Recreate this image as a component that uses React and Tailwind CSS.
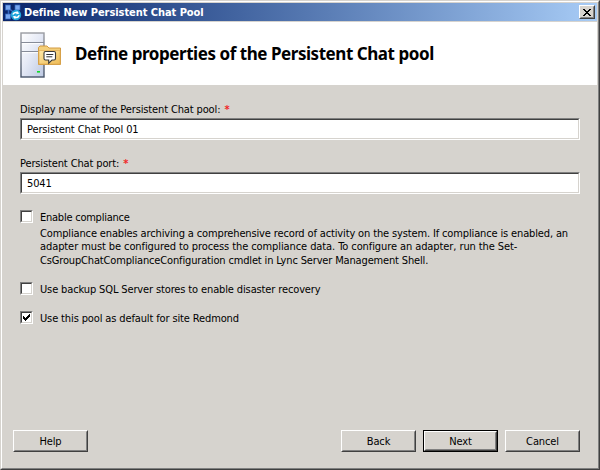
import React from "react";

function ServerIcon() {
  return (
    <svg width="44" height="48" viewBox="0 0 44 48" className="shrink-0">
      <defs>
        <linearGradient id="tower" x1="0" y1="0" x2="1" y2="1">
          <stop offset="0" stopColor="#ffffff" />
          <stop offset="0.45" stopColor="#e6eaf6" />
          <stop offset="1" stopColor="#bcc8e2" />
        </linearGradient>
        <linearGradient id="edge" x1="0" y1="0" x2="0" y2="1">
          <stop offset="0" stopColor="#9a9ca2" />
          <stop offset="1" stopColor="#47546a" />
        </linearGradient>
        <linearGradient id="folder" x1="0" y1="0" x2="1" y2="1">
          <stop offset="0" stopColor="#ffe9a8" />
          <stop offset="1" stopColor="#eebb55" />
        </linearGradient>
      </defs>
      <rect x="1" y="1" width="23" height="44" fill="url(#tower)" stroke="url(#edge)" strokeWidth="1.4" />
      <path d="M1 10.5H24M1 19.5H24" stroke="#868b98" strokeWidth="1.2" />
      <path d="M2 11.7H23M2 20.7H23" stroke="#fff" />
      <rect x="17" y="39" width="3" height="1.6" fill="#12dc2c" />
      <path d="M18.5 17V15.5L20 14H27L29 16H40.5V32.5H18.5Z" fill="#f3cf7b" stroke="#d39b43" />
      <path d="M19 18.5H40V32H19Z" fill="url(#folder)" stroke="#e0ac54" strokeWidth="0.7" />
      <path d="M25.5 19.5H34Q35.5 19.5 35.5 21V26.5Q35.5 28 34 28H32L28.7 31.2V28H25.5Q24 28 24 26.5V21Q24 19.5 25.5 19.5Z" fill="#fff" stroke="#393939" strokeWidth="1.1" />
      <path d="M26.3 22.5H33.3M26.3 24.8H32.3" stroke="#333" />
    </svg>
  );
}

function AppIcon() {
  return (
    <svg width="17" height="17" viewBox="0 0 17 17" className="shrink-0">
      <path d="M3.5 4L13 12M13 4L3.5 13M3.5 4V13M13 4V12" stroke="#3869bd" strokeWidth="1.5" />
      <g fill="#78a6ef" stroke="#3265bd" strokeWidth="0.7">
        <rect x="0.5" y="1" width="5" height="5" />
        <rect x="10" y="1" width="5" height="5" />
        <rect x="0.5" y="10" width="5" height="5" />
      </g>
      <circle cx="11" cy="11" r="5.2" fill="#1da4db" />
      <path d="M7.8 10.5Q9 7.5 12.5 8.8M14.3 11.3Q13 14.5 9.5 13.2" fill="none" stroke="#fff" strokeWidth="1.5" />
      <path d="M11.8 6.8L14.4 9.4L11.3 10.3ZM10.2 15.2L7.6 12.6L10.7 11.7Z" fill="#fff" />
    </svg>
  );
}

function Field({ label, value }) {
  return (
    <div>
      <div className="flex h-[15px] items-center gap-[4px] leading-[15px]">
        <span>{label}</span>
        <span className="-mt-px text-[11px] font-bold text-[#f02828]">*</span>
      </div>
      <div className="mt-px h-[22px] w-[560px] border border-t-[#808080] border-l-[#808080] border-r-white border-b-white">
        <div className="flex h-full items-center border border-t-[#404040] border-l-[#404040] border-r-[#d6d3ce] border-b-[#d6d3ce] bg-white pl-[5px]">
          <span>{value}</span>
        </div>
      </div>
    </div>
  );
}

function Check({ checked, children, textClass = "" }) {
  return (
    <div className="flex h-[13px] items-center gap-[7px]">
      <div className="h-[13px] w-[13px] shrink-0 border border-t-[#808080] border-l-[#808080] border-r-white border-b-white">
        <div className="flex h-full items-center justify-center border border-t-[#404040] border-l-[#404040] border-r-[#d6d3ce] border-b-[#d6d3ce] bg-white">
          {checked && (
            <svg width="7" height="7" viewBox="0 0 7 7" shapeRendering="crispEdges">
              <path d="M0 2h1v3h-1zM1 3h1v3h-1zM2 4h1v3h-1zM3 3h1v3h-1zM4 2h1v3h-1zM5 1h1v3h-1zM6 0h1v3h-1z" fill="#000" />
            </svg>
          )}
        </div>
      </div>
      <span className={`pt-[2px] ${textClass}`}>{children}</span>
    </div>
  );
}

function Button({ children, primary }) {
  return (
    <div className={`h-[22px] w-[75px] ${primary ? "border border-black" : ""}`}>
      <div className="h-full border border-t-white border-l-white border-r-[#404040] border-b-[#404040]">
        <div className="flex h-full items-center justify-center border border-t-[#d6d3ce] border-l-[#d6d3ce] border-r-[#808080] border-b-[#808080]">
          <span>{children}</span>
        </div>
      </div>
    </div>
  );
}

export default function App() {
  return (
    <div className="h-[470px] w-[600px] overflow-hidden border border-t-[#d6d3ce] border-l-[#d6d3ce] border-r-[#404040] border-b-[#404040] bg-[#d6d3ce] font-['DejaVu_Sans_Condensed','DejaVu_Sans',sans-serif] text-[11px] leading-[13px] tracking-[-0.13px] whitespace-nowrap text-black [font-stretch:condensed]">
      <div className="flex h-full flex-col border border-t-white border-l-white border-r-[#808080] border-b-[#808080] px-px pt-px">
        <div className="flex h-[18px] shrink-0 items-center bg-linear-to-r from-[#0a246a] to-[#a8ccf6] pr-[2px] pl-[2px]">
          <AppIcon />
          <span className="ml-[2px] text-[11px] font-bold tracking-[-0.06px] text-white">Define New Persistent Chat Pool</span>
          <div className="ml-auto h-[14px] w-[16px] border border-t-white border-l-white border-r-[#404040] border-b-[#404040] bg-[#d6d3ce]">
            <div className="flex h-full items-center justify-center border border-t-[#d6d3ce] border-l-[#d6d3ce] border-r-[#808080] border-b-[#808080]">
              <svg width="8" height="7" viewBox="0 0 8 7" shapeRendering="crispEdges">
                <path d="M0 0h2v1h-2zM6 0h2v1h-2zM1 1h2v1h-2zM5 1h2v1h-2zM2 2h4v1h-4zM3 3h2v1h-2zM2 4h4v1h-4zM1 5h2v1h-2zM5 5h2v1h-2zM0 6h2v1h-2zM6 6h2v1h-2z" fill="#000" />
              </svg>
            </div>
          </div>
        </div>
        <div className="mt-px flex h-[63px] shrink-0 bg-white pt-[10px] pl-[17px]">
          <ServerIcon />
          <h1 className="mt-[11px] ml-[11px] font-['Noto_Sans',sans-serif] text-[17px] leading-[22px] font-bold tracking-[-0.45px] [font-stretch:normal]">Define properties of the Persistent Chat pool</h1>
        </div>
        <div className="flex grow flex-col pt-[17px] pl-[17px]">
          <Field label="Display name of the Persistent Chat pool:" value="Persistent Chat Pool 01" />
          <div className="mt-[16px]">
            <Field label="Persistent Chat port:" value="5041" />
          </div>
          <div className="mt-[16px]">
            <Check textClass="tracking-[-0.24px]">Enable compliance</Check>
          </div>
          <div className="mt-[4px] ml-[20px] flex flex-col">
            <span className="h-[13px] tracking-[-0.14px]">Compliance enables archiving a comprehensive record of activity on the system. If compliance is enabled, an</span>
            <span className="h-[14px] tracking-[-0.09px]">adapter must be configured to process the compliance data. To configure an adapter, run the Set-</span>
            <span className="h-[13px] tracking-[-0.155px]">CsGroupChatComplianceConfiguration cmdlet in Lync Server Management Shell.</span>
          </div>
          <div className="mt-[15px]">
            <Check>Use backup SQL Server stores to enable disaster recovery</Check>
          </div>
          <div className="mt-[16px]">
            <Check checked>Use this pool as default for site Redmond</Check>
          </div>
          <div className="mt-auto mr-[17px] mb-[16px] -ml-[7px] flex gap-[7px]">
            <Button>Help</Button>
            <div className="ml-auto flex gap-[7px]">
              <Button>Back</Button>
              <Button primary>Next</Button>
              <Button>Cancel</Button>
            </div>
          </div>
        </div>
      </div>
    </div>
  );
}
